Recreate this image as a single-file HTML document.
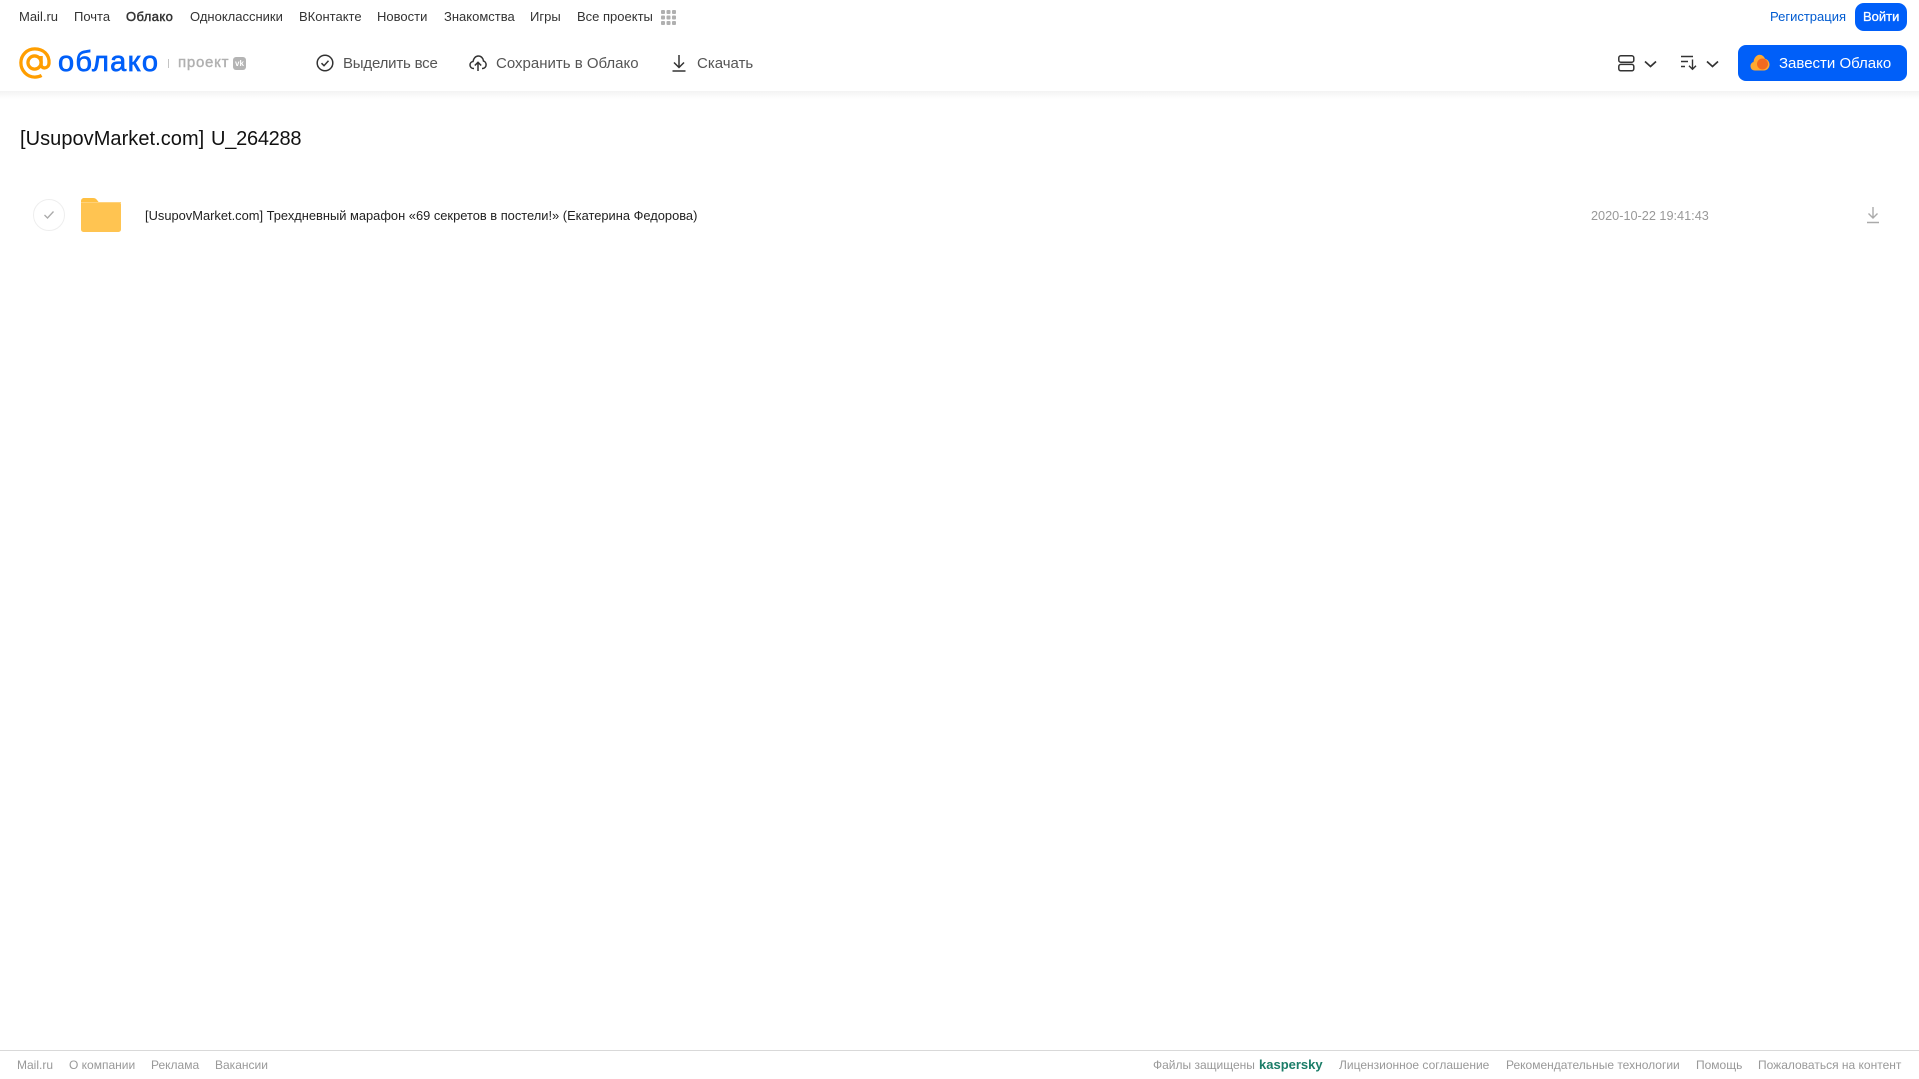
<!DOCTYPE html>
<html lang="ru"><head><meta charset="utf-8"><title>Облако</title>
<style>
html,body{margin:0;padding:0;background:#fff}
body{width:1919px;height:1079px;position:relative;overflow:hidden;font-family:"Liberation Sans","Noto Sans CJK SC",sans-serif}
.t{position:absolute;white-space:nowrap;line-height:16px}
.n{font-size:13px;color:#333;top:9px}
.b{font-size:15px;color:#555;top:56px}
.f{font-size:12px;color:#999;top:1057px}
svg{position:absolute;overflow:visible}
</style></head><body>
<div style="position:absolute;left:0;top:0;width:1919px;height:91px;background:#fff"></div>
<div style="position:absolute;left:0;top:91px;width:1919px;height:8px;background:linear-gradient(#f3f3f3,#fff)"></div>

<span class="t n" style="left:126px;font-weight:normal;-webkit-text-stroke:.45px #333;letter-spacing:.4px">Облако</span>
<span class="t n" style="left:19px">Mail.ru</span>
<span class="t n" style="left:74px">Почта</span>
<span class="t n" style="left:190px">Одноклассники</span>
<span class="t n" style="left:299px">ВКонтакте</span>
<span class="t n" style="left:377px">Новости</span>
<span class="t n" style="left:444px">Знакомства</span>
<span class="t n" style="left:530px">Игры</span>
<span class="t n" style="left:577px">Все проекты</span>
<svg style="left:661px;top:10px" width="15" height="15" fill="#b0b0b0"><rect width="4" height="4" rx="1"/><rect x="5.500" width="4" height="4" rx="1"/><rect x="11" width="4" height="4" rx="1"/><rect y="5.500" width="4" height="4" rx="1"/><rect x="5.500" y="5.500" width="4" height="4" rx="1"/><rect x="11" y="5.500" width="4" height="4" rx="1"/><rect y="11" width="4" height="4" rx="1"/><rect x="5.500" y="11" width="4" height="4" rx="1"/><rect x="11" y="11" width="4" height="4" rx="1"/></svg>
<span class="t n" style="left:1770px;color:#005bd1">Регистрация</span>
<div style="position:absolute;left:1855px;top:3px;width:52px;height:28px;border-radius:9px;background:#005ff9"></div>
<span class="t n" style="left:1863px;color:#fff;-webkit-text-stroke:.3px #fff">Войти</span>

<!-- logo -->
<svg style="left:19px;top:47px" width="32" height="32" viewBox="0 0 34 34" fill="none" stroke="#ff9e00" stroke-width="3.500"><circle cx="16.500" cy="16.500" r="7"/><path d="M23.500 9.500v9c0 5.400 8 5 8.400-1.400C32.400 7.800 25.500 2 16.800 2 8.500 2 2 8.500 2 16.800S8.500 32 16.800 32c2.600 0 5-.6 7.200-1.800"/></svg>
<svg style="left:57px;top:40px" width="106" height="40"><text x="1" y="31" font-family="Liberation Sans" font-size="29" font-weight="normal" fill="#005ff9" stroke="#005ff9" stroke-width=".7" textLength="100" lengthAdjust="spacing">облако</text></svg>
<div style="position:absolute;left:168px;top:59px;width:1px;height:9px;background:#c4c4c4"></div>
<span class="t" style="left:178px;top:55px;font-size:15px;color:#b0b0b0;-webkit-text-stroke:.4px #b0b0b0;letter-spacing:.75px">проект</span>
<div style="position:absolute;left:233px;top:57px;width:13px;height:13px;border-radius:3px;background:#b4b4b4;color:#fff;font:bold 8px/13px 'Liberation Sans',sans-serif;text-align:center">vk</div>

<!-- toolbar -->
<svg style="left:316px;top:54px" width="18" height="18" fill="none" stroke="#333" stroke-width="1.500"><circle cx="9" cy="9" r="7.800"/><path d="M5.500 9.200l2.500 2.500 4.500-5"/></svg>
<span class="t b" style="left:343px;letter-spacing:-.2px">Выделить все</span>
<svg style="left:469px;top:54px" width="18" height="18" fill="none" stroke="#333" stroke-width="1.500"><path d="M5 14.500H4.500C2.500 14.500 1 13 1 11c0-1.800 1.300-3.300 3-3.500C4.500 4.500 6.500 2 9.300 2c2.800 0 4.900 2.200 5.200 5 1.500.4 2.600 2 2.600 3.800 0 2-1.500 3.700-3.600 3.700H13"/><path d="M9 17V8.500M5.800 11.500L9 8.300l3.200 3.200"/></svg>
<span class="t b" style="left:496px">Сохранить в Облако</span>
<svg style="left:671px;top:54px" width="16" height="18" fill="none" stroke="#333" stroke-width="1.500"><path d="M8 1v12M3 8.500L8 13.500l5-5M1.500 17h13"/></svg>
<span class="t b" style="left:697px">Скачать</span>

<!-- right tools -->
<svg style="left:1618px;top:55px" width="17" height="17" fill="none" stroke="#333" stroke-width="1.500"><rect x=".8" y=".8" width="15" height="6.400" rx="2"/><rect x=".8" y="9.400" width="15" height="6.400" rx="2"/></svg>
<svg style="left:1643.500px;top:60px" width="13" height="8" fill="none" stroke="#333" stroke-width="1.700"><path d="M1 1.500l5.500 5 5.500-5"/></svg>
<svg style="left:1681px;top:55px" width="17" height="16" fill="none" stroke="#333" stroke-width="1.400"><path d="M0 1.500h12M0 6.500h7M0 11.500h4M11.500 4.500V14M8 10.800l3.500 3.500 3.500-3.500"/></svg>
<svg style="left:1705.500px;top:60px" width="13" height="8" fill="none" stroke="#333" stroke-width="1.700"><path d="M1 1.500l5.500 5 5.500-5"/></svg>
<div style="position:absolute;left:1738px;top:45px;width:169px;height:36px;border-radius:8px;background:#005ff9"></div>
<svg style="left:1750px;top:54px" width="20" height="17"><path d="M5 16.500C2 16.500.5 14.500.5 12c0-2 1.200-3.500 3-4C4 4 6.500.8 9.500.8c2.500 0 4.500 1.500 5.500 4 2.500.5 4.500 3 4.500 5.700 0 3.300-2.500 6-5.500 6z" fill="#ffa930"/><circle cx="12.500" cy="10" r="5.500" fill="#f26a1f"/></svg>
<span class="t" style="left:1779px;top:56px;font-size:15px;color:#fff">Завести Облако</span>

<!-- content -->
<span class="t" style="left:20px;top:127px;font-size:20px;line-height:24px;color:#111;letter-spacing:.05px">[UsupovMarket.com]</span>
<span class="t" style="left:211px;top:127px;font-size:20px;line-height:24px;color:#111;letter-spacing:-.25px">U_264288</span>
<div style="position:absolute;left:33px;top:199px;width:30px;height:30px;border:1px solid #eee;border-radius:50%"></div>
<svg style="left:43px;top:210px" width="12" height="10" fill="none" stroke="#aaa" stroke-width="1.300"><path d="M1.500 5l3 3 6-6.500"/></svg>
<svg style="left:81px;top:198px" width="40" height="35"><path d="M0 3C0 1.300 1.300 0 3 0h9c2 0 3 .8 4 2l2 2.500V30H0z" fill="#ffc042"/><rect x="0" y="4" width="40" height="30" rx="2.500" fill="#ffc451"/><rect x="0" y="4" width="40" height="1" fill="#ffd27a"/></svg>
<span class="t" style="left:145px;top:208px;font-size:12.880px;color:#222">[UsupovMarket.com] Трехдневный марафон «69 секретов в постели!» (Екатерина Федорова)</span>
<span class="t" style="left:1591px;top:208px;font-size:12.700px;color:#999">2020-10-22 19:41:43</span>
<svg style="left:1866px;top:206px" width="14" height="18" fill="none" stroke="#aaa" stroke-width="1.400"><path d="M7 1v11M2.500 7.500L7 12l4.500-4.500M1 16.500h12"/></svg>

<!-- footer -->
<div style="position:absolute;left:0;top:1050px;width:1919px;height:1px;background:#d9d9d9"></div>
<span class="t f" style="left:17px">Mail.ru</span>
<span class="t f" style="left:69px">О компании</span>
<span class="t f" style="left:151px">Реклама</span>
<span class="t f" style="left:215px">Вакансии</span>
<span class="t f" style="left:1153px">Файлы защищены</span>
<span class="t f" style="left:1259px;font-size:13px;font-weight:bold;color:#1b7d68">kaspersky</span>
<span class="t f" style="left:1339px">Лицензионное соглашение</span>
<span class="t f" style="left:1506px">Рекомендательные технологии</span>
<span class="t f" style="left:1696px">Помощь</span>
<span class="t f" style="left:1758px">Пожаловаться на контент</span>
</body></html>
